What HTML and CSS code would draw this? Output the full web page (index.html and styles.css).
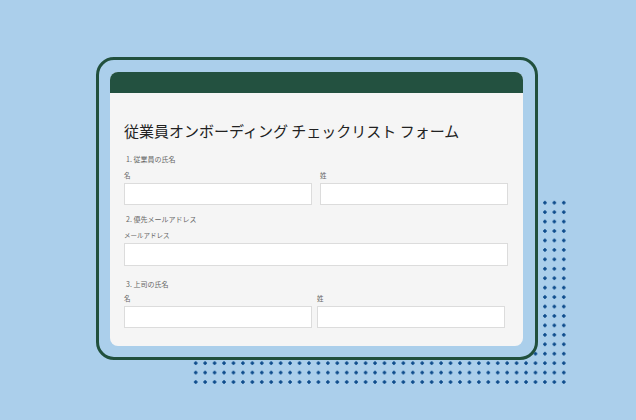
FILE: index.html
```
<!DOCTYPE html>
<html>
<head>
  <title>従業員オンボーディング チェックリスト フォーム</title>
  <link rel="stylesheet" href="styles.css">
</head>
<body>
  <div class="stage">
    <!-- dotted pattern behind the frame -->
    <div class="dots"></div>

    <div class="frame">
      <div class="card">
        <div class="card-header"></div>
        <div class="card-body">
          <h1>従業員オンボーディング チェックリスト フォーム</h1>

          <div class="question">
            <div class="q-title">1. 従業員の氏名</div>
            <div class="row">
              <div class="field">
                <label>名</label>
                <div class="input"></div>
              </div>
              <div class="field">
                <label>姓</label>
                <div class="input"></div>
              </div>
            </div>
          </div>

          <div class="question">
            <div class="q-title">2. 優先メールアドレス</div>
            <div class="field">
              <label>メールアドレス</label>
              <div class="input input-tall"></div>
            </div>
          </div>

          <div class="question question-wide">
            <div class="q-title">3. 上司の氏名</div>
            <div class="row row-tight">
              <div class="field">
                <label>名</label>
                <div class="input"></div>
              </div>
              <div class="field">
                <label>姓</label>
                <div class="input"></div>
              </div>
            </div>
          </div>
        </div>
      </div>
    </div>
  </div>
</body>
</html>
```

FILE: styles.css
```
body {
  margin: 0;
  background-color: #abcfeb;
  font-family: "Noto Sans CJK JP", "Noto Sans", sans-serif;
}

.stage {
  position: relative;
  width: 636px;
  height: 420px;
  padding: 57px 0 0 96px;
  box-sizing: border-box;
  overflow: hidden;
}

.dots {
  position: absolute;
  left: 191.3px;
  top: 198.3px;
  width: 378px;
  height: 189px;
  background-image: radial-gradient(circle, #0d4b8b 1.4px, transparent 1.9px);
  background-size: 9.45px 9.45px;
}

.frame {
  position: relative; /* sits over the dots */
  width: 442px;
  height: 303px;
  box-sizing: border-box;
  border: 3px solid #21503d;
  border-radius: 18px;
  background-color: #abcfeb;
  padding: 12px 12px 0 11px;
}

.card {
  height: 274px;
  border-radius: 8px;
  overflow: hidden;
  background-color: #f5f5f5;
}

.card-header {
  height: 21px;
  background-color: #235140;
}

.card-body {
  padding: 28px 15px 0 14px;
}

h1 {
  margin: 0 0 13px;
  font-size: 15px;
  line-height: 20px;
  font-weight: 400;
  color: #222;
}

.question + .question {
  margin-top: 9px;
}

.question-wide {
  margin-top: 13px !important;
}

.q-title {
  font-size: 7px;
  line-height: 10px;
  color: #666;
  padding-left: 2px;
  margin-bottom: 6px;
}

.question-wide .q-title {
  margin-bottom: 4px;
}

.row {
  display: grid;
  grid-template-columns: 1fr 1fr;
  gap: 8px;
}

.row-tight {
  grid-template-columns: 188px 188px;
  gap: 5px;
}

.field label {
  display: block;
  font-size: 6.5px;
  line-height: 10px;
  color: #666;
  margin-bottom: 3px;
}

.input {
  height: 22px;
  box-sizing: border-box;
  background-color: #fff;
  border: 1px solid #dcdcdc;
}

.input-tall {
  height: 23px;
}
```
